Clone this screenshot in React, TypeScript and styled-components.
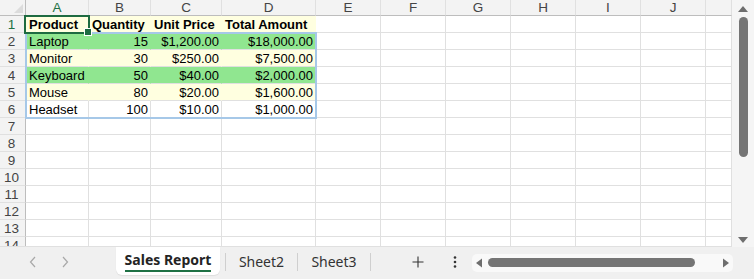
import React from "react";
import styled, { createGlobalStyle } from "styled-components";

const GlobalStyle = createGlobalStyle`
  html, body { margin: 0; padding: 0; background: #ffffff; }
  body { width: 754px; height: 279px; overflow: hidden; font-family: "Liberation Sans", Arial, sans-serif; }
  * { box-sizing: border-box; }
`;

const COLS = [
  { key: "A", w: 63 },
  { key: "B", w: 62 },
  { key: "C", w: 71 },
  { key: "D", w: 94 },
  { key: "E", w: 65 },
  { key: "F", w: 65 },
  { key: "G", w: 65 },
  { key: "H", w: 65 },
  { key: "I", w: 65 },
  { key: "J", w: 65 },
  { key: "", w: 26 },
];

const YELLOW = "#ffffe0";
const GREEN = "#90e690";

type Row = { cells: string[]; bg: string; bold?: boolean };

const DATA: Row[] = [
  { cells: ["Product", "Quantity", "Unit Price", "Total Amount"], bg: YELLOW, bold: true },
  { cells: ["Laptop", "15", "$1,200.00", "$18,000.00"], bg: GREEN },
  { cells: ["Monitor", "30", "$250.00", "$7,500.00"], bg: YELLOW },
  { cells: ["Keyboard", "50", "$40.00", "$2,000.00"], bg: GREEN },
  { cells: ["Mouse", "80", "$20.00", "$1,600.00"], bg: YELLOW },
  { cells: ["Headset", "100", "$10.00", "$1,000.00"], bg: "#ffffff" },
];

const Page = styled.div`
  width: 754px;
  height: 279px;
  display: flex;
  flex-direction: column;
  background: #f0f0f0;
`;

const Top = styled.div`
  display: flex;
  height: 247px;
`;

const SheetArea = styled.div`
  position: relative;
  width: 732px;
  height: 247px;
  overflow: hidden;
  background: #ffffff;
  border-bottom: 1px solid #e0e0e0;
`;

const Grid = styled.div`
  display: grid;
  grid-template-columns: 26px ${COLS.map((c) => c.w + "px").join(" ")};
  grid-auto-rows: 17px;
  grid-template-rows: 16px;
`;

const Corner = styled.div`
  position: relative;
  background: #f3f3f3;
  border-right: 1px solid #bdbdbd;
  border-bottom: 1px solid #bdbdbd;
  &::after {
    content: "";
    position: absolute;
    right: 2px;
    bottom: 2px;
    width: 0;
    height: 0;
    border-left: 9px solid transparent;
    border-bottom: 9px solid #dcdcdc;
  }
`;

const ColHeader = styled.div<{ $active?: boolean }>`
  background: #f3f3f3;
  border-right: 1px solid #e0e0e0;
  border-bottom: 1px solid ${(p) => (p.$active ? "#a0a0a0" : "#bdbdbd")};
  color: ${(p) => (p.$active ? "#1e7145" : "#444444")};
  font-family: "Liberation Sans", Arial, sans-serif;
  font-size: 13.5px;
  line-height: 16px;
  text-align: center;
`;

const RowHeader = styled.div<{ $active?: boolean }>`
  background: #f3f3f3;
  border-right: 1px solid #bdbdbd;
  border-bottom: 1px solid #e0e0e0;
  color: ${(p) => (p.$active ? "#1e7145" : "#444444")};
  font-family: "Liberation Sans", Arial, sans-serif;
  font-size: 13.5px;
  line-height: 18px;
  text-align: center;
  padding-right: 2px;
`;

const Cell = styled.div<{ $bg?: string; $bold?: boolean; $right?: boolean }>`
  background: ${(p) => p.$bg || "#ffffff"};
  border-right: 1px solid ${(p) => (p.$bg && p.$bg !== "#ffffff" ? "transparent" : "#e0e0e0")};
  border-bottom: 1px solid #e0e0e0;
  font-family: "Liberation Sans", Arial, sans-serif;
  font-size: 13px;
  line-height: 18px;
  font-weight: ${(p) => (p.$bold ? 700 : 400)};
  color: #000000;
  text-align: ${(p) => (p.$right ? "right" : "left")};
  padding: 0 2px 0 3px;
  white-space: nowrap;
  overflow: visible;
`;

const RangeBorder = styled.div`
  position: absolute;
  left: 25px;
  top: 32px;
  width: 292px;
  height: 87px;
  border: 2px solid #a6c8e8;
  pointer-events: none;
`;

const ActiveCell = styled.div`
  position: absolute;
  left: 24px;
  top: 15px;
  width: 66px;
  height: 19px;
  border: 2px solid #1e6b41;
  pointer-events: none;
  &::after {
    content: "";
    position: absolute;
    right: -4px;
    bottom: -4px;
    width: 6px;
    height: 6px;
    background: #1e6b41;
    border: 1px solid #ffffff;
  }
`;

const VScroll = styled.div`
  position: relative;
  width: 22px;
  height: 247px;
  background: #f5f5f5;
`;

const VThumb = styled.div`
  position: absolute;
  left: 7px;
  top: 17px;
  width: 9px;
  height: 140px;
  border-radius: 5px;
  background: #757575;
`;

const Arrow = styled.svg<{ $x: number; $y: number }>`
  position: absolute;
  display: block;
  left: ${(p) => p.$x}px;
  top: ${(p) => p.$y}px;
`;

const TabBar = styled.div`
  flex: 1;
  display: flex;
  align-items: stretch;
  background: #f0f0f0;
  font-family: "Noto Sans", "Open Sans", sans-serif;
`;

const NavGroup = styled.div`
  display: flex;
  align-items: center;
  gap: 20px;
  padding-left: 27px;
  padding-bottom: 3px;
  width: 116px;
`;

const NavButton = styled.div`
  width: 12px;
  height: 14px;
  display: flex;
  align-items: center;
  justify-content: center;
`;

const ActiveTab = styled.div`
  width: 104px;
  height: 28px;
  background: #ffffff;
  border-radius: 0 0 6px 6px;
  box-shadow: 0 1px 1px rgba(0, 0, 0, 0.08);
  display: flex;
  flex-direction: column;
  align-items: center;
  padding-top: 3px;
`;

const ActiveLabel = styled.span`
  font-size: 14px;
  font-weight: 700;
  color: #242424;
  line-height: 19px;
  border-bottom: 2px solid #1e7145;
  padding-bottom: 1px;
`;

const Sep = styled.div<{ $ml?: number }>`
  width: 1px;
  height: 18px;
  background: #cfcfcf;
  align-self: center;
  margin-top: -2px;
  margin-left: ${(p) => p.$ml || 0}px;
`;

const Tab = styled.div<{ $w: number }>`
  width: ${(p) => p.$w}px;
  display: flex;
  align-items: center;
  justify-content: center;
  font-size: 14px;
  color: #333333;
  padding-bottom: 3px;
`;

const IconBtn = styled.div<{ $w: number; $ml: number }>`
  width: ${(p) => p.$w}px;
  margin-left: ${(p) => p.$ml}px;
  display: flex;
  align-items: center;
  justify-content: center;
  padding-bottom: 3px;
`;

const HScroll = styled.div`
  position: relative;
  margin-top: 7px;
  margin-left: 12px;
  width: 261px;
  height: 18px;
  border-radius: 5px;
  background: #f9f9f9;
`;

const HThumb = styled.div`
  position: absolute;
  left: 16px;
  top: 4px;
  width: 207px;
  height: 9px;
  border-radius: 5px;
  background: #757575;
`;

const Chevron = ({ dir }: { dir: "left" | "right" }) => (
  <svg width="8" height="12" viewBox="0 0 8 12">
    <path
      d={dir === "left" ? "M6 1 L1.5 6 L6 11" : "M2 1 L6.5 6 L2 11"}
      fill="none"
      stroke="#a8a8a8"
      strokeWidth="1.2"
    />
  </svg>
);

export default function App() {
  const rowCount = 14;
  return (
    <>
      <GlobalStyle />
      <Page>
        <Top>
          <SheetArea>
            <Grid>
              <Corner />
              {COLS.map((c, i) => (
                <ColHeader key={"h" + i} $active={c.key === "A"}>
                  {c.key}
                </ColHeader>
              ))}
              {Array.from({ length: rowCount }).map((_, r) => {
                const row = DATA[r];
                return (
                  <React.Fragment key={"r" + r}>
                    <RowHeader $active={r === 0}>{r + 1}</RowHeader>
                    {COLS.map((c, ci) => {
                      if (row && ci < 4) {
                        return (
                          <Cell
                            key={ci}
                            $bg={row.bg}
                            $bold={row.bold}
                            $right={!row.bold && ci > 0}
                          >
                            {row.cells[ci]}
                          </Cell>
                        );
                      }
                      return <Cell key={ci} />;
                    })}
                  </React.Fragment>
                );
              })}
            </Grid>
            <RangeBorder />
            <ActiveCell />
          </SheetArea>
          <VScroll>
            <Arrow width="12" height="8" viewBox="0 0 12 8" $x={5} $y={5}>
              <path d="M1 7 L6 1 L11 7 Z" fill="#6e6e6e" />
            </Arrow>
            <VThumb />
            <Arrow width="12" height="8" viewBox="0 0 12 8" $x={5} $y={236}>
              <path d="M1 1 L6 7 L11 1 Z" fill="#6e6e6e" />
            </Arrow>
          </VScroll>
        </Top>
        <TabBar>
          <NavGroup>
            <NavButton>
              <Chevron dir="left" />
            </NavButton>
            <NavButton>
              <Chevron dir="right" />
            </NavButton>
          </NavGroup>
          <ActiveTab>
            <ActiveLabel>Sales Report</ActiveLabel>
          </ActiveTab>
          <Sep $ml={5} />
          <Tab $w={71}>Sheet2</Tab>
          <Sep />
          <Tab $w={72}>Sheet3</Tab>
          <Sep />
          <IconBtn $w={24} $ml={35}>
            <svg width="12" height="12" viewBox="0 0 12 12">
              <path d="M6 0.5 V11.5 M0.5 6 H11.5" stroke="#333" strokeWidth="1.1" />
            </svg>
          </IconBtn>
          <IconBtn $w={10} $ml={20}>
            <svg width="4" height="14" viewBox="0 0 4 14">
              <circle cx="2" cy="2.5" r="1.3" fill="#333" />
              <circle cx="2" cy="7" r="1.3" fill="#333" />
              <circle cx="2" cy="11.5" r="1.3" fill="#333" />
            </svg>
          </IconBtn>
          <HScroll>
            <Arrow width="8" height="10" viewBox="0 0 8 10" $x={3} $y={4}>
              <path d="M7 0.5 L1 5 L7 9.5 Z" fill="#6e6e6e" />
            </Arrow>
            <HThumb />
            <Arrow width="8" height="10" viewBox="0 0 8 10" $x={250} $y={4}>
              <path d="M1 0.5 L7 5 L1 9.5 Z" fill="#6e6e6e" />
            </Arrow>
          </HScroll>
        </TabBar>
      </Page>
    </>
  );
}
